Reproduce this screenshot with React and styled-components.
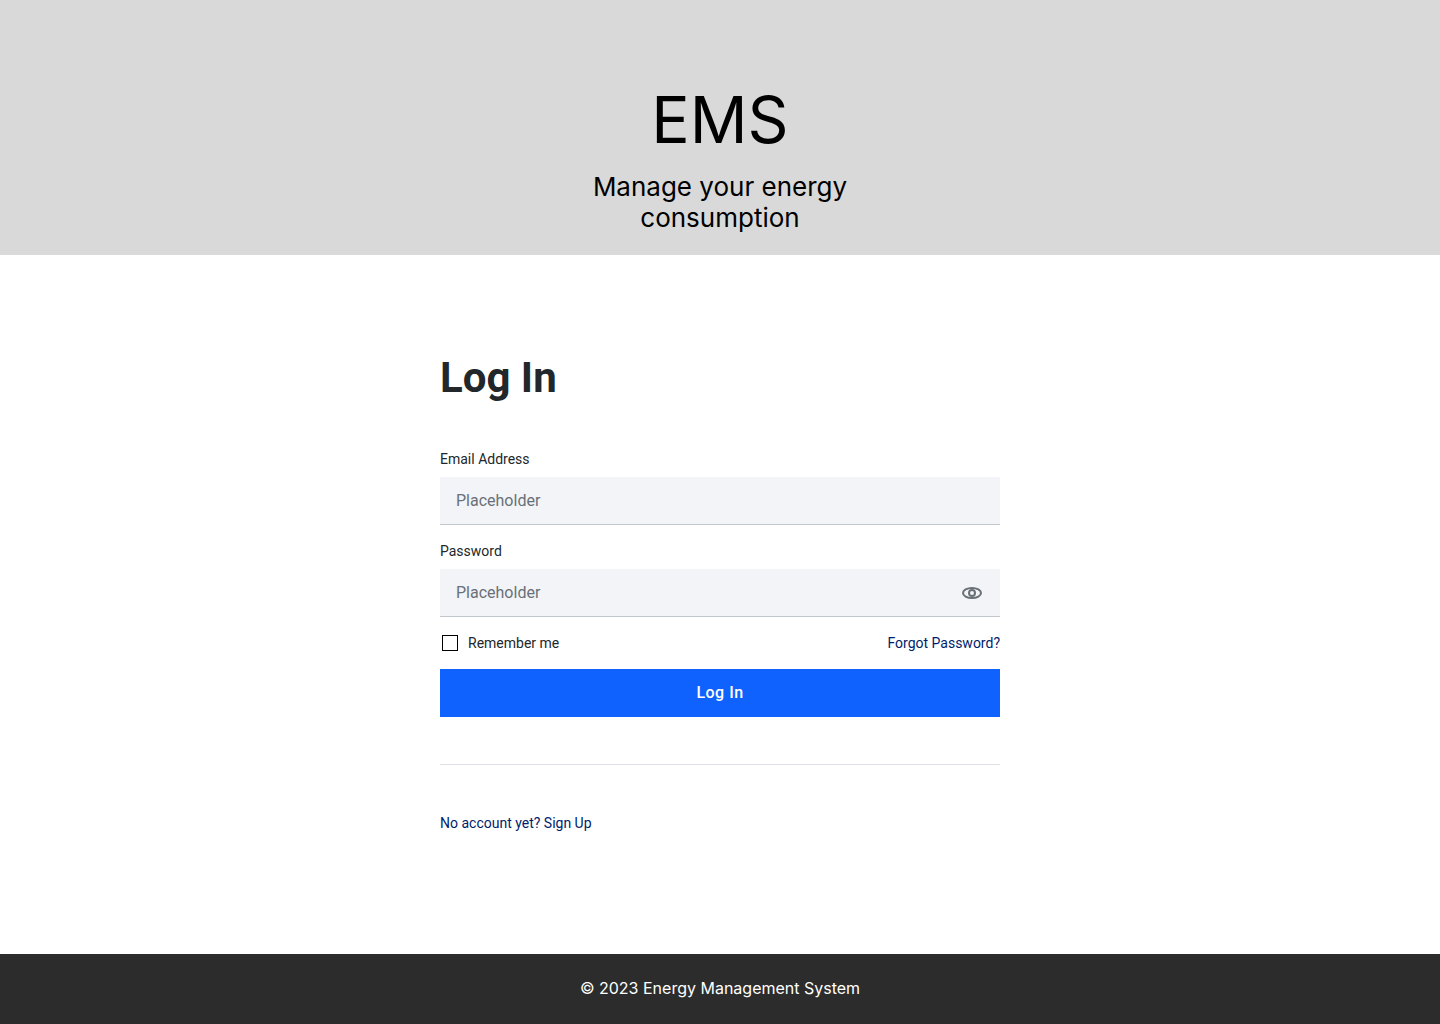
import React, { useState } from "react";
import styled, { createGlobalStyle } from "styled-components";

const GlobalStyle = createGlobalStyle`
  *, *::before, *::after { box-sizing: border-box; }
  body { margin: 0; background: #ffffff; font-family: Roboto, sans-serif; color: #21272a; }
`;

const Page = styled.div`
  min-height: 100vh;
  display: flex;
  flex-direction: column;
`;

const Banner = styled.header`
  display: flex;
  flex-direction: column;
  align-items: center;
  padding: 80px 24px 22px;
  background: #d9d9d9;
  color: #000000;
  font-family: Inter, sans-serif;
  text-align: center;
`;

const Brand = styled.p`
  margin: 0 0 11px;
  font-size: 64px;
  line-height: 80px;
`;

const Tagline = styled.p`
  margin: 0;
  max-width: 300px;
  font-size: 26px;
  line-height: 31px;
`;

const Main = styled.main`
  flex: 1;
  display: flex;
  flex-direction: column;
  width: 100%;
  max-width: 608px;
  margin: 0 auto;
  padding: 100px 24px 48px;
`;

const Title = styled.h1`
  margin: 0 0 48px;
  font-size: 42px;
  line-height: 46px;
  font-weight: 700;
`;

const Form = styled.form`
  display: flex;
  flex-direction: column;
  gap: 16px;
`;

const Field = styled.div`
  display: flex;
  flex-direction: column;
  gap: 8px;
`;

const Label = styled.label`
  font-size: 14px;
  line-height: 20px;
`;

const InputBox = styled.div`
  display: flex;
  align-items: center;
  height: 48px;
  padding: 0 16px;
  background: #f2f4f8;
  border-bottom: 1px solid #c1c7cd;
`;

const Input = styled.input`
  flex: 1;
  min-width: 0;
  padding: 0;
  border: 0;
  outline: 0;
  background: transparent;
  color: #21272a;
  font: 16px/22px Roboto, sans-serif;
  &::placeholder { color: #697077; opacity: 1; }
`;

const IconButton = styled.button`
  display: flex;
  padding: 0;
  border: 0;
  background: none;
  color: #697077;
  cursor: pointer;
`;

const Options = styled.div`
  display: flex;
  justify-content: space-between;
  align-items: center;
  height: 20px;
`;

const Remember = styled.label`
  display: flex;
  align-items: center;
  gap: 10px;
  padding-left: 2px;
  font-size: 14px;
  line-height: 20px;
`;

const Checkbox = styled.input`
  appearance: none;
  width: 16px;
  height: 16px;
  margin: 0;
  border: 1px solid #000000;
  background: #ffffff;
  &:checked { background: #0f62fe; }
`;

const Link = styled.a`
  align-self: flex-start;
  color: #001d6c;
  font-size: 14px;
  line-height: 20px;
  text-decoration: none;
`;

const Submit = styled.button`
  height: 48px;
  border: 0;
  background: #0f62fe;
  color: #ffffff;
  font: 500 16px/16px Roboto, sans-serif;
  letter-spacing: 0.5px;
  cursor: pointer;
`;

const Divider = styled.hr`
  width: 100%;
  margin: 47px 0 48px;
  border: 0;
  border-top: 1px solid #dde1e6;
`;

const Footer = styled.footer`
  padding: 24px 24px 26px;
  background: #2c2c2c;
  color: #ffffff;
  font: 16px/20px Inter, sans-serif;
  text-align: center;
`;

function EyeIcon() {
  return (
    <svg width="24" height="24" viewBox="0 0 24 24" fill="none" stroke="currentColor" strokeWidth="2" aria-hidden="true">
      <ellipse cx="12" cy="12" rx="9" ry="5" />
      <circle cx="12" cy="12" r="3" />
    </svg>
  );
}

export default function App() {
  const [visible, setVisible] = useState(false);
  return (
    <Page>
      <GlobalStyle />
      <Banner>
        <Brand>EMS</Brand>
        <Tagline>Manage your energy consumption</Tagline>
      </Banner>
      <Main>
        <Title>Log In</Title>
        <Form onSubmit={(event) => event.preventDefault()}>
          <Field>
            <Label htmlFor="email">Email Address</Label>
            <InputBox>
              <Input id="email" type="email" placeholder="Placeholder" />
            </InputBox>
          </Field>
          <Field>
            <Label htmlFor="password">Password</Label>
            <InputBox>
              <Input id="password" type={visible ? "text" : "password"} placeholder="Placeholder" />
              <IconButton type="button" aria-label="Show password" aria-pressed={visible} onClick={() => setVisible(!visible)}>
                <EyeIcon />
              </IconButton>
            </InputBox>
          </Field>
          <Options>
            <Remember>
              <Checkbox type="checkbox" />
              Remember me
            </Remember>
            <Link href="#forgot">Forgot Password?</Link>
          </Options>
          <Submit type="submit">Log In</Submit>
        </Form>
        <Divider />
        <Link href="#signup">No account yet? Sign Up</Link>
      </Main>
      <Footer>© 2023 Energy Management System</Footer>
    </Page>
  );
}
